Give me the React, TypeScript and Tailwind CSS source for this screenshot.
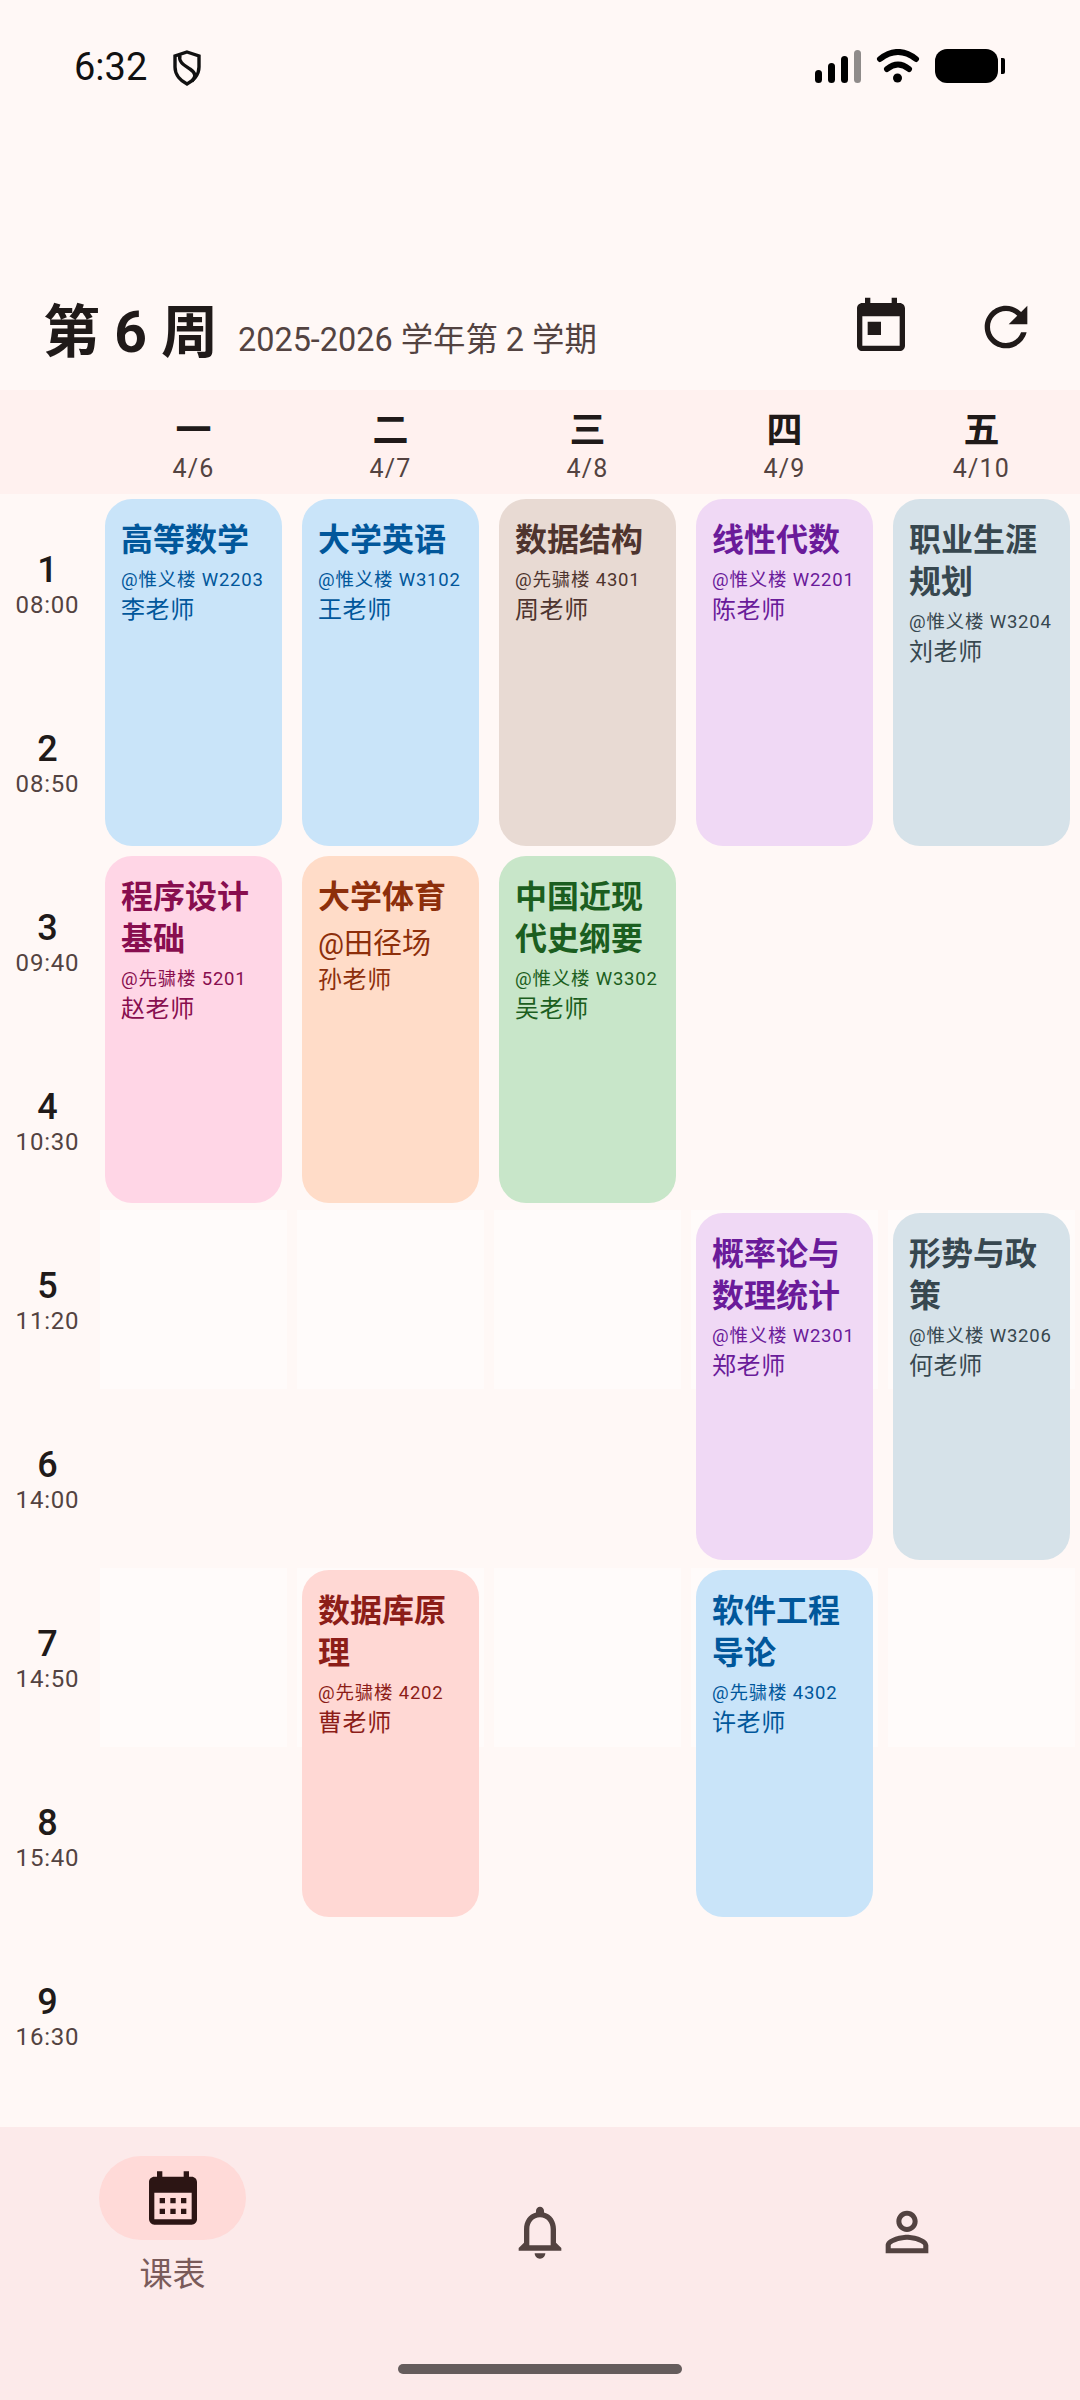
const days = [
  { name: "一", date: "4/6" },
  { name: "二", date: "4/7" },
  { name: "三", date: "4/8" },
  { name: "四", date: "4/9" },
  { name: "五", date: "4/10" },
];

const periods = [
  { n: 1, time: "08:00", cls: "row-start-1" },
  { n: 2, time: "08:50", cls: "row-start-2" },
  { n: 3, time: "09:40", cls: "row-start-3" },
  { n: 4, time: "10:30", cls: "row-start-4" },
  { n: 5, time: "11:20", cls: "row-start-5" },
  { n: 6, time: "14:00", cls: "row-start-6" },
  { n: 7, time: "14:50", cls: "row-start-7" },
  { n: 8, time: "15:40", cls: "row-start-8" },
  { n: 9, time: "16:30", cls: "row-start-9" },
];

const colours = {
  blue: "bg-[#c9e4f9] text-[#01579b]",
  pink: "bg-[#ffd6e6] text-[#880e4f]",
  orange: "bg-[#ffdcc8] text-[#8d2f0b]",
  red: "bg-[#ffd8d4] text-[#8c1d18]",
  brown: "bg-[#e8dad3] text-[#4e342e]",
  green: "bg-[#c8e6c9] text-[#1b5e20]",
  purple: "bg-[#f0d9f5] text-[#6a1b9a]",
  slate: "bg-[#d6e2e9] text-[#37474f]",
};

// lighter tiles on the free slots of periods 5 and 7
const tiles = [
  "col-start-2 row-start-5", "col-start-3 row-start-5", "col-start-4 row-start-5", "col-start-5 row-start-5", "col-start-6 row-start-5",
  "col-start-2 row-start-7", "col-start-3 row-start-7", "col-start-4 row-start-7", "col-start-5 row-start-7", "col-start-6 row-start-7",
];

const courses = [
  { title: "高等数学", room: "@惟义楼 W2203", teacher: "李老师", colour: colours.blue, pos: "col-start-2 row-start-1 mt-[5px]" },
  { title: "程序设计基础", room: "@先骕楼 5201", teacher: "赵老师", colour: colours.pink, pos: "col-start-2 row-start-3 mt-[4px]" },
  { title: "大学英语", room: "@惟义楼 W3102", teacher: "王老师", colour: colours.blue, pos: "col-start-3 row-start-1 mt-[5px]" },
  { title: "大学体育", room: "@田径场", teacher: "孙老师", colour: colours.orange, pos: "col-start-3 row-start-3 mt-[4px]", bigRoom: true },
  { title: "数据库原理", room: "@先骕楼 4202", teacher: "曹老师", colour: colours.red, pos: "col-start-3 row-start-7 mt-[2px]" },
  { title: "数据结构", room: "@先骕楼 4301", teacher: "周老师", colour: colours.brown, pos: "col-start-4 row-start-1 mt-[5px]" },
  { title: "中国近现代史纲要", room: "@惟义楼 W3302", teacher: "吴老师", colour: colours.green, pos: "col-start-4 row-start-3 mt-[4px]" },
  { title: "线性代数", room: "@惟义楼 W2201", teacher: "陈老师", colour: colours.purple, pos: "col-start-5 row-start-1 mt-[5px]" },
  { title: "概率论与数理统计", room: "@惟义楼 W2301", teacher: "郑老师", colour: colours.purple, pos: "col-start-5 row-start-5 mt-[3px]" },
  { title: "软件工程导论", room: "@先骕楼 4302", teacher: "许老师", colour: colours.blue, pos: "col-start-5 row-start-7 mt-[2px]" },
  { title: "职业生涯规划", room: "@惟义楼 W3204", teacher: "刘老师", colour: colours.slate, pos: "col-start-6 row-start-1 mt-[5px]" },
  { title: "形势与政策", room: "@惟义楼 W3206", teacher: "何老师", colour: colours.slate, pos: "col-start-6 row-start-5 mt-[3px]" },
];

function Icon({ d, className }: { d: string; className: string }) {
  return (
    <svg viewBox="0 0 24 24" fill="currentColor" className={className}>
      <path d={d} />
    </svg>
  );
}

function StatusBar() {
  return (
    <div className="flex h-[130px] items-start justify-between pl-[74px] pr-[75px] pt-[49px]">
      <div className="flex items-center">
        <span className="-mt-[2px] text-[38px] leading-[34px] text-[#111]">6:32</span>
        <svg viewBox="0 0 30 36" className="ml-[25px] mt-[1px] h-[36px] w-[30px]" fill="none" stroke="#111" strokeWidth="3.4">
          <path d="M15 2 L27 6 V17 C27 25 21 31 15 34 C9 31 3 25 3 17 V6 Z" />
          <path d="M8 5 C6 12 12 15 18 19 C24 23 24 27 20 31" />
        </svg>
      </div>
      <div className="flex items-center">
        <div className="flex h-[34px] items-end gap-[6px]">
          <div className="h-[13px] w-[7px] rounded-full bg-black" />
          <div className="h-[20px] w-[7px] rounded-full bg-black" />
          <div className="h-[27px] w-[7px] rounded-full bg-black" />
          <div className="h-[33px] w-[7px] rounded-full bg-[#8f8b8a]" />
        </div>
        <svg viewBox="0 0 44 34" className="ml-[15px] h-[34px] w-[44px]" fill="none" stroke="#000" strokeWidth="6" strokeLinecap="round">
          <path d="M4 10 Q22 -4 40 10" />
          <path d="M11 20 Q22 11 33 20" />
          <circle cx="21.5" cy="29" r="4.5" fill="#000" stroke="none" />
        </svg>
        <div className="ml-[15px] h-[34px] w-[63px] rounded-[12px] bg-black" />
        <div className="ml-[3px] h-[16px] w-[4px] rounded-r-[2px] bg-black" />
      </div>
    </div>
  );
}

function Header() {
  return (
    <div className="mt-[140px] flex h-[120px] items-center pl-[43px] pr-[42px] text-[#201a19]">
      <h1 className="mt-[6px] text-[57px] font-bold leading-[80px]">第 6 周</h1>
      <span className="ml-[20px] mt-[20px] text-[32.4px] leading-[44px] text-[#534341]">2025-2026 学年第 2 学期</span>
      <div className="mb-[6px] ml-auto flex gap-[61px]">
        <Icon
          className="h-[64px] w-[64px]"
          d="M19 3h-1V1h-2v2H8V1H6v2H5c-1.11 0-1.99.9-1.99 2L3 19c0 1.1.89 2 2 2h14c1.1 0 2-.9 2-2V5c0-1.1-.9-2-2-2zm0 16H5V8h14v11zM7 10h5v5H7z"
        />
        <Icon
          className="h-[64px] w-[64px]"
          d="M17.65 6.35C16.2 4.9 14.21 4 12 4c-4.42 0-7.99 3.58-7.99 8s3.57 8 7.99 8c3.73 0 6.84-2.55 7.73-6h-2.08c-.82 2.33-3.04 4-5.65 4-3.31 0-6-2.69-6-6s2.69-6 6-6c1.66 0 3.14.69 4.22 1.78L13 11h7V4l-2.35 2.35z"
        />
      </div>
    </div>
  );
}

function DayRow() {
  return (
    <div className="grid h-[104px] grid-cols-[95px_repeat(5,197px)] bg-[#fff1ef]">
      <div />
      {days.map((day) => (
        <div key={day.name} className="flex flex-col items-center pt-[19px]">
          <span className="text-[36px] font-semibold leading-[44px] text-[#201a19]">{day.name}</span>
          <span className="text-[25px] leading-[32px] tracking-[1.2px] text-[#534341]">{day.date}</span>
        </div>
      ))}
    </div>
  );
}

function CourseCard({ course }: { course: (typeof courses)[number] }) {
  return (
    <div className={`${course.pos} ${course.colour} relative mx-[10px] h-[347px] self-start rounded-[27px] px-[16px] pt-[20px]`}>
      <div className="text-[32px] font-semibold leading-[42px]">{course.title}</div>
      <div className={course.bigRoom ? "mb-[2px] mt-[7px] text-[29px] leading-[38px]" : "mt-[4px] text-[18.5px] leading-[30px] tracking-[0.8px]"}>
        {course.room}
      </div>
      <div className="text-[24px] leading-[30px] tracking-[0.6px]">{course.teacher}</div>
    </div>
  );
}

function Timetable() {
  return (
    <div className="grid flex-1 grid-cols-[95px_repeat(5,197px)] grid-rows-[repeat(9,179px)] content-start">
      {periods.map((p) => (
        <div key={p.n} className={`${p.cls} col-start-1 flex flex-col items-center justify-center`}>
          <span className="text-[36px] font-medium leading-[42px] text-[#201a19]">{p.n}</span>
          <span className="text-[24px] leading-[28px] tracking-[0.8px] text-[#534341]">{p.time}</span>
        </div>
      ))}
      {tiles.map((t) => (
        <div key={t} className={`${t} mx-[5px] h-[179px] bg-[#fffbfa]`} />
      ))}
      {courses.map((c) => (
        <CourseCard key={c.title} course={c} />
      ))}
    </div>
  );
}

function BottomNav() {
  return (
    <div className="relative h-[273px] bg-[#fceaea]">
      <div className="flex justify-between px-[99px] pt-[29px]">
        <div className="flex w-[147px] flex-col items-center">
          <div className="flex h-[84px] w-[147px] items-center justify-center rounded-full bg-[#ffdad8] text-[#2c1514]">
            <Icon
              className="h-[64px] w-[64px]"
              d="M19 4h-1V2h-2v2H8V2H6v2H5c-1.11 0-1.99.9-1.99 2L3 20a2 2 0 0 0 2 2h14c1.1 0 2-.9 2-2V6c0-1.1-.9-2-2-2zm0 16H5V10h14v10zM9 14H7v-2h2v2zm4 0h-2v-2h2v2zm4 0h-2v-2h2v2zm-8 4H7v-2h2v2zm4 0h-2v-2h2v2zm4 0h-2v-2h2v2z"
            />
          </div>
          <span className="mt-[15px] text-[33px] leading-[40px] text-[#7a5b5a]">课表</span>
        </div>
        <div className="flex h-[152px] w-[147px] items-center justify-center text-[#534341]">
          <Icon
            className="h-[64px] w-[64px]"
            d="M12 22c1.1 0 2-.9 2-2h-4c0 1.1.9 2 2 2zm6-6v-5c0-3.07-1.63-5.64-4.5-6.32V4c0-.83-.67-1.5-1.5-1.5s-1.5.67-1.5 1.5v.68C7.64 5.36 6 7.92 6 11v5l-2 2v1h16v-1l-2-2zm-2 1H8v-6c0-2.48 1.51-4.5 4-4.5s4 2.02 4 4.5v6z"
          />
        </div>
        <div className="flex h-[152px] w-[147px] items-center justify-center pr-[1px] text-[#534341]">
          <Icon
            className="h-[64px] w-[64px]"
            d="M12 5.9c1.16 0 2.1.94 2.1 2.1s-.94 2.1-2.1 2.1S9.9 9.16 9.9 8s.94-2.1 2.1-2.1m0 9c2.97 0 6.1 1.46 6.1 2.1v1.1H5.9V17c0-.64 3.13-2.1 6.1-2.1M12 4C9.79 4 8 5.79 8 8s1.79 4 4 4 4-1.79 4-4-1.79-4-4-4zm0 9c-2.67 0-8 1.34-8 4v3h16v-3c0-2.66-5.33-4-8-4z"
          />
        </div>
      </div>
      <div className="absolute bottom-[26px] left-[398px] h-[10px] w-[284px] rounded-full bg-[#655c5c]" />
    </div>
  );
}

export default function App() {
  return (
    <div className="flex h-[2400px] w-[1080px] flex-col overflow-hidden bg-[#fff8f6] font-[Roboto,'Noto_Sans_CJK_SC',sans-serif]">
      <StatusBar />
      <Header />
      <DayRow />
      <Timetable />
      <BottomNav />
    </div>
  );
}
